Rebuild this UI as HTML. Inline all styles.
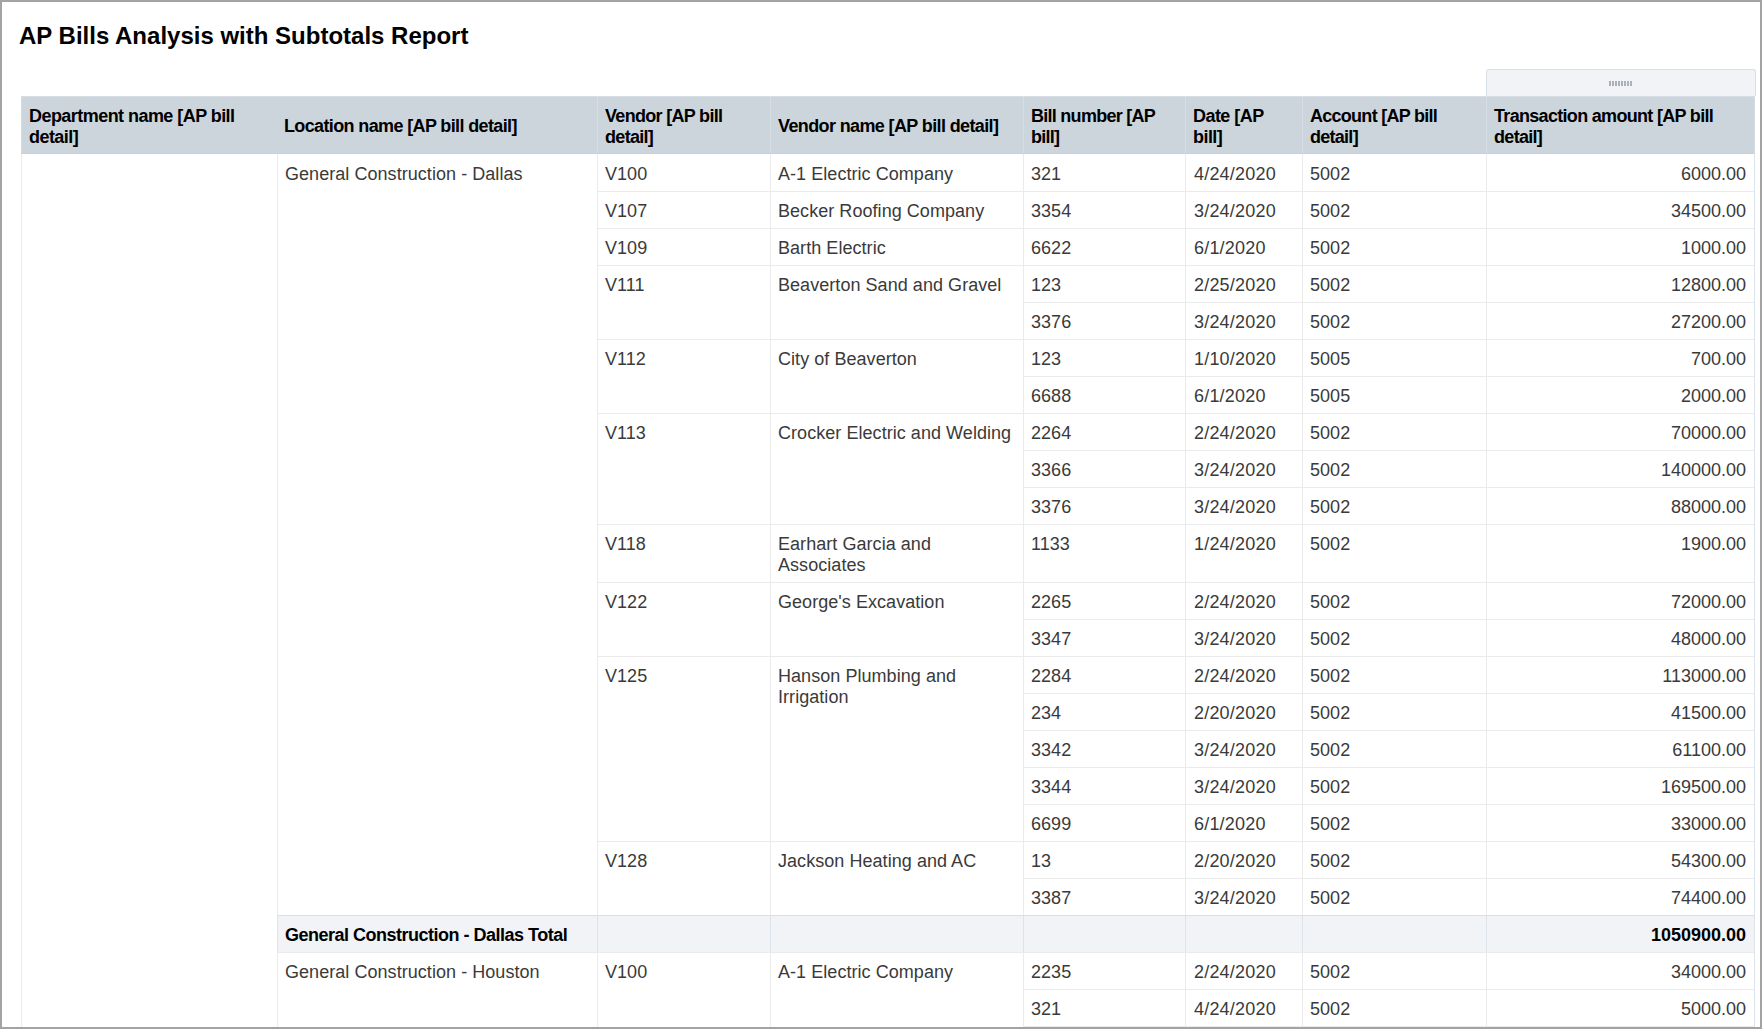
<!DOCTYPE html>
<html><head><meta charset="utf-8"><style>
html,body{margin:0;padding:0;}
body{width:1762px;height:1029px;overflow:hidden;position:relative;background:#fff;font-family:"Liberation Sans",sans-serif;}
#frame{position:absolute;left:0;top:0;width:1758px;height:1025px;border:2px solid #a3a3a3;}
#root{position:absolute;left:0;top:0;width:1762px;height:1029px;overflow:hidden;}
#root div{position:absolute;}
.title{left:19px;top:22px;font-size:24px;font-weight:bold;color:#000;line-height:28px;white-space:nowrap;}
.hdr{background:#cdd5dc;}
.hdrb{background:#c8d1d8;}
.hvl{background:#d6dde4;}
.ht{font-size:18px;font-weight:bold;line-height:21px;color:#000;white-space:nowrap;letter-spacing:-0.55px;}
.handle{box-sizing:border-box;border:1px solid #dae0e7;border-bottom:none;border-radius:3px 3px 0 0;background:#f1f3f6;}
.grip{left:122px;top:11px;width:23px;height:5px;background:repeating-linear-gradient(90deg,#a9b1b9 0 2px,transparent 2px 3px);}
.vl{background:#ebebeb;}
.vlb{background:#dde3ea;}
.hl{background:#ebebeb;}
.bt{font-size:18px;line-height:21px;color:#3a3a3a;white-space:nowrap;letter-spacing:0.05px;}
.b{font-weight:bold;color:#000;letter-spacing:-0.5px;}
.bn{letter-spacing:0;}
.tb{background:#d8dfe7;}
.tot{background:#f1f3f6;}
.tvl{background:#dce3ea;}
</style></head><body>
<div id="root">
<div class="title">AP Bills Analysis with Subtotals Report</div>
<div class="hdr" style="left:21px;top:96px;width:1734px;height:57px;"></div>
<div class="hvl" style="left:1754px;top:96px;width:1px;height:58px;"></div>
<div class="hdrb" style="left:21px;top:153px;width:1733px;height:1px;"></div>
<div class="hvl" style="left:21px;top:96px;width:1733px;height:1px;"></div>
<div class="hvl" style="left:21px;top:96px;width:1px;height:57px;"></div>
<div class="hvl" style="left:597px;top:96px;width:1px;height:57px;"></div>
<div class="hvl" style="left:770px;top:96px;width:1px;height:57px;"></div>
<div class="hvl" style="left:1023px;top:96px;width:1px;height:57px;"></div>
<div class="hvl" style="left:1185px;top:96px;width:1px;height:57px;"></div>
<div class="hvl" style="left:1302px;top:96px;width:1px;height:57px;"></div>
<div class="hvl" style="left:1486px;top:96px;width:1px;height:57px;"></div>
<div class="ht" style="left:29px;top:106px;letter-spacing:-0.55px;">Department name [AP bill<br>detail]</div>
<div class="ht" style="left:284px;top:116px;letter-spacing:-0.63px;">Location name [AP bill detail]</div>
<div class="ht" style="left:605px;top:106px;letter-spacing:-0.69px;">Vendor [AP bill<br>detail]</div>
<div class="ht" style="left:778px;top:116px;letter-spacing:-0.62px;">Vendor name [AP bill detail]</div>
<div class="ht" style="left:1031px;top:106px;letter-spacing:-0.73px;">Bill number [AP<br>bill]</div>
<div class="ht" style="left:1193px;top:106px;letter-spacing:-0.55px;">Date [AP<br>bill]</div>
<div class="ht" style="left:1310px;top:106px;letter-spacing:-0.73px;">Account [AP bill<br>detail]</div>
<div class="ht" style="left:1494px;top:106px;letter-spacing:-0.69px;">Transaction amount [AP bill<br>detail]</div>
<div class="handle" style="left:1486px;top:69px;width:270px;height:27px;"><div class="grip"></div></div>
<div class="vl" style="left:21px;top:154px;width:1px;height:875px;"></div>
<div class="vl" style="left:277px;top:154px;width:1px;height:875px;"></div>
<div class="vl" style="left:597px;top:154px;width:1px;height:875px;"></div>
<div class="vl" style="left:770px;top:154px;width:1px;height:875px;"></div>
<div class="vl" style="left:1023px;top:154px;width:1px;height:875px;"></div>
<div class="vl" style="left:1185px;top:154px;width:1px;height:875px;"></div>
<div class="vl" style="left:1302px;top:154px;width:1px;height:875px;"></div>
<div class="vl" style="left:1486px;top:154px;width:1px;height:875px;"></div>
<div class="vlb" style="left:1754px;top:154px;width:1px;height:875px;"></div>
<div class="bt" style="left:605px;top:164px;">V100</div>
<div class="bt" style="left:778px;top:164px;">A-1 Electric Company</div>
<div class="bt" style="left:1031px;top:164px;">321</div>
<div class="bt" style="left:1194px;top:164px;letter-spacing:0.2px;">4/24/2020</div>
<div class="bt" style="left:1310px;top:164px;">5002</div>
<div class="bt" style="left:1486px;top:164px;width:260px;text-align:right;letter-spacing:0;">6000.00</div>
<div class="hl" style="left:597px;top:191px;width:1157px;height:1px;"></div>
<div class="bt" style="left:605px;top:201px;">V107</div>
<div class="bt" style="left:778px;top:201px;">Becker Roofing Company</div>
<div class="bt" style="left:1031px;top:201px;">3354</div>
<div class="bt" style="left:1194px;top:201px;letter-spacing:0.2px;">3/24/2020</div>
<div class="bt" style="left:1310px;top:201px;">5002</div>
<div class="bt" style="left:1486px;top:201px;width:260px;text-align:right;letter-spacing:0;">34500.00</div>
<div class="hl" style="left:597px;top:228px;width:1157px;height:1px;"></div>
<div class="bt" style="left:605px;top:238px;">V109</div>
<div class="bt" style="left:778px;top:238px;">Barth Electric</div>
<div class="bt" style="left:1031px;top:238px;">6622</div>
<div class="bt" style="left:1194px;top:238px;letter-spacing:0.2px;">6/1/2020</div>
<div class="bt" style="left:1310px;top:238px;">5002</div>
<div class="bt" style="left:1486px;top:238px;width:260px;text-align:right;letter-spacing:0;">1000.00</div>
<div class="hl" style="left:597px;top:265px;width:1157px;height:1px;"></div>
<div class="bt" style="left:605px;top:275px;">V111</div>
<div class="bt" style="left:778px;top:275px;">Beaverton Sand and Gravel</div>
<div class="bt" style="left:1031px;top:275px;">123</div>
<div class="bt" style="left:1194px;top:275px;letter-spacing:0.2px;">2/25/2020</div>
<div class="bt" style="left:1310px;top:275px;">5002</div>
<div class="bt" style="left:1486px;top:275px;width:260px;text-align:right;letter-spacing:0;">12800.00</div>
<div class="hl" style="left:1023px;top:302px;width:731px;height:1px;"></div>
<div class="bt" style="left:1031px;top:312px;">3376</div>
<div class="bt" style="left:1194px;top:312px;letter-spacing:0.2px;">3/24/2020</div>
<div class="bt" style="left:1310px;top:312px;">5002</div>
<div class="bt" style="left:1486px;top:312px;width:260px;text-align:right;letter-spacing:0;">27200.00</div>
<div class="hl" style="left:597px;top:339px;width:1157px;height:1px;"></div>
<div class="bt" style="left:605px;top:349px;">V112</div>
<div class="bt" style="left:778px;top:349px;">City of Beaverton</div>
<div class="bt" style="left:1031px;top:349px;">123</div>
<div class="bt" style="left:1194px;top:349px;letter-spacing:0.2px;">1/10/2020</div>
<div class="bt" style="left:1310px;top:349px;">5005</div>
<div class="bt" style="left:1486px;top:349px;width:260px;text-align:right;letter-spacing:0;">700.00</div>
<div class="hl" style="left:1023px;top:376px;width:731px;height:1px;"></div>
<div class="bt" style="left:1031px;top:386px;">6688</div>
<div class="bt" style="left:1194px;top:386px;letter-spacing:0.2px;">6/1/2020</div>
<div class="bt" style="left:1310px;top:386px;">5005</div>
<div class="bt" style="left:1486px;top:386px;width:260px;text-align:right;letter-spacing:0;">2000.00</div>
<div class="hl" style="left:597px;top:413px;width:1157px;height:1px;"></div>
<div class="bt" style="left:605px;top:423px;">V113</div>
<div class="bt" style="left:778px;top:423px;">Crocker Electric and Welding</div>
<div class="bt" style="left:1031px;top:423px;">2264</div>
<div class="bt" style="left:1194px;top:423px;letter-spacing:0.2px;">2/24/2020</div>
<div class="bt" style="left:1310px;top:423px;">5002</div>
<div class="bt" style="left:1486px;top:423px;width:260px;text-align:right;letter-spacing:0;">70000.00</div>
<div class="hl" style="left:1023px;top:450px;width:731px;height:1px;"></div>
<div class="bt" style="left:1031px;top:460px;">3366</div>
<div class="bt" style="left:1194px;top:460px;letter-spacing:0.2px;">3/24/2020</div>
<div class="bt" style="left:1310px;top:460px;">5002</div>
<div class="bt" style="left:1486px;top:460px;width:260px;text-align:right;letter-spacing:0;">140000.00</div>
<div class="hl" style="left:1023px;top:487px;width:731px;height:1px;"></div>
<div class="bt" style="left:1031px;top:497px;">3376</div>
<div class="bt" style="left:1194px;top:497px;letter-spacing:0.2px;">3/24/2020</div>
<div class="bt" style="left:1310px;top:497px;">5002</div>
<div class="bt" style="left:1486px;top:497px;width:260px;text-align:right;letter-spacing:0;">88000.00</div>
<div class="hl" style="left:597px;top:524px;width:1157px;height:1px;"></div>
<div class="bt" style="left:605px;top:534px;">V118</div>
<div class="bt" style="left:778px;top:534px;">Earhart Garcia and<br>Associates</div>
<div class="bt" style="left:1031px;top:534px;">1133</div>
<div class="bt" style="left:1194px;top:534px;letter-spacing:0.2px;">1/24/2020</div>
<div class="bt" style="left:1310px;top:534px;">5002</div>
<div class="bt" style="left:1486px;top:534px;width:260px;text-align:right;letter-spacing:0;">1900.00</div>
<div class="hl" style="left:597px;top:582px;width:1157px;height:1px;"></div>
<div class="bt" style="left:605px;top:592px;">V122</div>
<div class="bt" style="left:778px;top:592px;">George's Excavation</div>
<div class="bt" style="left:1031px;top:592px;">2265</div>
<div class="bt" style="left:1194px;top:592px;letter-spacing:0.2px;">2/24/2020</div>
<div class="bt" style="left:1310px;top:592px;">5002</div>
<div class="bt" style="left:1486px;top:592px;width:260px;text-align:right;letter-spacing:0;">72000.00</div>
<div class="hl" style="left:1023px;top:619px;width:731px;height:1px;"></div>
<div class="bt" style="left:1031px;top:629px;">3347</div>
<div class="bt" style="left:1194px;top:629px;letter-spacing:0.2px;">3/24/2020</div>
<div class="bt" style="left:1310px;top:629px;">5002</div>
<div class="bt" style="left:1486px;top:629px;width:260px;text-align:right;letter-spacing:0;">48000.00</div>
<div class="hl" style="left:597px;top:656px;width:1157px;height:1px;"></div>
<div class="bt" style="left:605px;top:666px;">V125</div>
<div class="bt" style="left:778px;top:666px;">Hanson Plumbing and<br>Irrigation</div>
<div class="bt" style="left:1031px;top:666px;">2284</div>
<div class="bt" style="left:1194px;top:666px;letter-spacing:0.2px;">2/24/2020</div>
<div class="bt" style="left:1310px;top:666px;">5002</div>
<div class="bt" style="left:1486px;top:666px;width:260px;text-align:right;letter-spacing:0;">113000.00</div>
<div class="hl" style="left:1023px;top:693px;width:731px;height:1px;"></div>
<div class="bt" style="left:1031px;top:703px;">234</div>
<div class="bt" style="left:1194px;top:703px;letter-spacing:0.2px;">2/20/2020</div>
<div class="bt" style="left:1310px;top:703px;">5002</div>
<div class="bt" style="left:1486px;top:703px;width:260px;text-align:right;letter-spacing:0;">41500.00</div>
<div class="hl" style="left:1023px;top:730px;width:731px;height:1px;"></div>
<div class="bt" style="left:1031px;top:740px;">3342</div>
<div class="bt" style="left:1194px;top:740px;letter-spacing:0.2px;">3/24/2020</div>
<div class="bt" style="left:1310px;top:740px;">5002</div>
<div class="bt" style="left:1486px;top:740px;width:260px;text-align:right;letter-spacing:0;">61100.00</div>
<div class="hl" style="left:1023px;top:767px;width:731px;height:1px;"></div>
<div class="bt" style="left:1031px;top:777px;">3344</div>
<div class="bt" style="left:1194px;top:777px;letter-spacing:0.2px;">3/24/2020</div>
<div class="bt" style="left:1310px;top:777px;">5002</div>
<div class="bt" style="left:1486px;top:777px;width:260px;text-align:right;letter-spacing:0;">169500.00</div>
<div class="hl" style="left:1023px;top:804px;width:731px;height:1px;"></div>
<div class="bt" style="left:1031px;top:814px;">6699</div>
<div class="bt" style="left:1194px;top:814px;letter-spacing:0.2px;">6/1/2020</div>
<div class="bt" style="left:1310px;top:814px;">5002</div>
<div class="bt" style="left:1486px;top:814px;width:260px;text-align:right;letter-spacing:0;">33000.00</div>
<div class="hl" style="left:597px;top:841px;width:1157px;height:1px;"></div>
<div class="bt" style="left:605px;top:851px;">V128</div>
<div class="bt" style="left:778px;top:851px;">Jackson Heating and AC</div>
<div class="bt" style="left:1031px;top:851px;">13</div>
<div class="bt" style="left:1194px;top:851px;letter-spacing:0.2px;">2/20/2020</div>
<div class="bt" style="left:1310px;top:851px;">5002</div>
<div class="bt" style="left:1486px;top:851px;width:260px;text-align:right;letter-spacing:0;">54300.00</div>
<div class="hl" style="left:1023px;top:878px;width:731px;height:1px;"></div>
<div class="bt" style="left:1031px;top:888px;">3387</div>
<div class="bt" style="left:1194px;top:888px;letter-spacing:0.2px;">3/24/2020</div>
<div class="bt" style="left:1310px;top:888px;">5002</div>
<div class="bt" style="left:1486px;top:888px;width:260px;text-align:right;letter-spacing:0;">74400.00</div>
<div class="bt" style="left:285px;top:164px;">General Construction - Dallas</div>
<div class="tb" style="left:277px;top:915px;width:1478px;height:1px;"></div>
<div class="tot" style="left:277px;top:916px;width:1477px;height:36px;"></div>
<div class="tvl" style="left:277px;top:915px;width:1px;height:37px;"></div>
<div class="tvl" style="left:597px;top:915px;width:1px;height:37px;"></div>
<div class="tvl" style="left:770px;top:915px;width:1px;height:37px;"></div>
<div class="tvl" style="left:1023px;top:915px;width:1px;height:37px;"></div>
<div class="tvl" style="left:1185px;top:915px;width:1px;height:37px;"></div>
<div class="tvl" style="left:1302px;top:915px;width:1px;height:37px;"></div>
<div class="tvl" style="left:1486px;top:915px;width:1px;height:37px;"></div>
<div class="tvl" style="left:1754px;top:915px;width:1px;height:37px;"></div>
<div class="bt b" style="left:285px;top:925px;">General Construction - Dallas Total</div>
<div class="bt b bn" style="left:1486px;top:925px;width:260px;text-align:right;">1050900.00</div>
<div class="bt" style="left:285px;top:962px;">General Construction - Houston</div>
<div class="hl" style="left:277px;top:952px;width:1477px;height:1px;"></div>
<div class="bt" style="left:605px;top:962px;">V100</div>
<div class="bt" style="left:778px;top:962px;">A-1 Electric Company</div>
<div class="bt" style="left:1031px;top:962px;">2235</div>
<div class="bt" style="left:1194px;top:962px;letter-spacing:0.2px;">2/24/2020</div>
<div class="bt" style="left:1310px;top:962px;">5002</div>
<div class="bt" style="left:1486px;top:962px;width:260px;text-align:right;letter-spacing:0;">34000.00</div>
<div class="hl" style="left:1023px;top:989px;width:731px;height:1px;"></div>
<div class="bt" style="left:1031px;top:999px;">321</div>
<div class="bt" style="left:1194px;top:999px;letter-spacing:0.2px;">4/24/2020</div>
<div class="bt" style="left:1310px;top:999px;">5002</div>
<div class="bt" style="left:1486px;top:999px;width:260px;text-align:right;letter-spacing:0;">5000.00</div>
<div class="hl" style="left:1023px;top:1026px;width:731px;height:1px;"></div>
</div>
<div id="frame"></div>
</body></html>
